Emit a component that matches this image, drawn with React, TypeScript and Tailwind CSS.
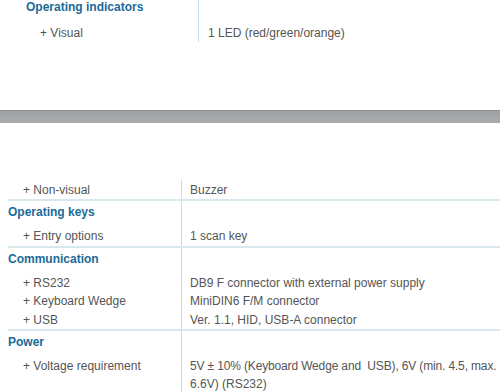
import React from 'react';

type Row = { label: string; value?: React.ReactNode };

const Heading: React.FC<{ title: string }> = ({ title }) => (
  <div className="grid grid-cols-[174px_1fr] h-[24px]">
    <div className="border-r border-[#c9dde8] pt-[2px] leading-[18px] font-bold text-[#1a6a98]">{title}</div>
    <div />
  </div>
);

const Items: React.FC<{ rows: Row[] }> = ({ rows }) => (
  <div className="grid grid-cols-[174px_1fr] border-b-2 border-[#d9e7ef]">
    <div className="border-r border-[#c9dde8] pt-[2px]">
      {rows.map((r) => (
        <div key={r.label} className="pl-[15px] leading-[18.5px]">
          + {r.label}
        </div>
      ))}
    </div>
    <div className="pt-[2px] pl-[8px]">
      {rows.map((r) => (
        <div key={r.label} className="leading-[18.5px]">
          {r.value}
        </div>
      ))}
    </div>
  </div>
);

const App: React.FC = () => {
  return (
    <div
      className="w-[500px] h-[392px] overflow-hidden bg-white text-[12px] text-[#555555]"
      style={{ fontFamily: '"Liberation Sans", Arial, sans-serif' }}
    >
      {/* top part of the page */}
      <div className="h-[110px] pl-[26px]">
        <div className="grid grid-cols-[173px_1fr]">
          <div className="border-r border-[#c9dde8]">
            <div className="h-[24px] leading-[14px] font-bold text-[#1a6a98]">Operating indicators</div>
            <div className="h-[18px] leading-[18px] pl-[14px]">+ Visual</div>
          </div>
          <div className="pl-[9px]">
            <div className="h-[24px]" />
            <div className="leading-[18px]">1 LED (red/green/orange)</div>
          </div>
        </div>
      </div>

      {/* separator bar */}
      <div className="h-[13px] border-t border-[#8c8f92] bg-gradient-to-b from-[#9ea1a4] to-[#a9acaf]" />

      {/* lower part */}
      <div className="pt-[57px] pl-[8px]">
        <div className="grid grid-cols-[174px_1fr] border-b-2 border-[#d9e7ef]">
          <div className="border-r border-[#c9dde8] h-[19px] pt-[1px] leading-[18px] pl-[15px]">+ Non-visual</div>
          <div className="pt-[1px] leading-[18px] pl-[8px]">Buzzer</div>
        </div>

        <Heading title="Operating keys" />
        <Items rows={[{ label: 'Entry options', value: '1 scan key' }]} />

        <Heading title="Communication" />
        <Items
          rows={[
            { label: 'RS232', value: 'DB9 F connector with external power supply' },
            { label: 'Keyboard Wedge', value: 'MiniDIN6 F/M connector' },
            { label: 'USB', value: 'Ver. 1.1, HID, USB-A connector' },
          ]}
        />

        <Heading title="Power" />
        <div className="grid grid-cols-[174px_1fr] border-b-2 border-[#d9e7ef]">
          <div className="border-r border-[#c9dde8] pt-[2px] pl-[15px] leading-[18px]">+ Voltage requirement</div>
          <div className="pt-[2px] pl-[8px] leading-[18px]">
            <div className="whitespace-nowrap tracking-[-0.15px]">
              5V ± 10% (Keyboard Wedge and&nbsp; USB), 6V (min. 4.5, max.
            </div>
            <div>6.6V) (RS232)</div>
          </div>
        </div>
      </div>
    </div>
  );
};

export default App;
